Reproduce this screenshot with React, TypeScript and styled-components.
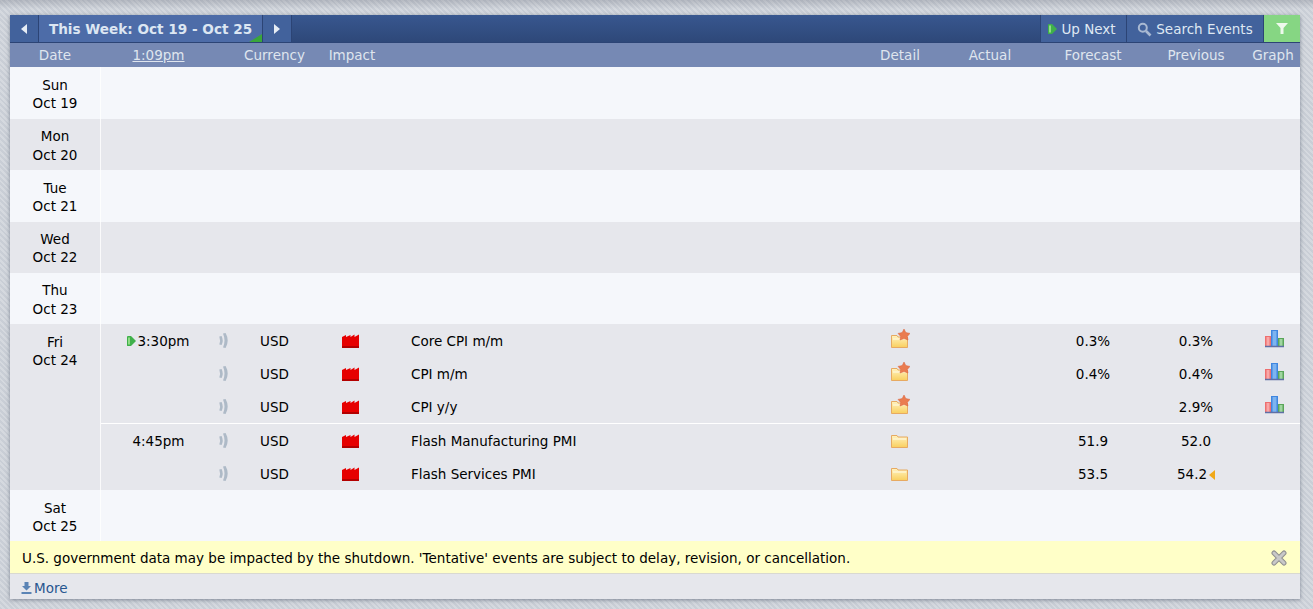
import React from 'react'
import styled, { createGlobalStyle } from 'styled-components'

const GlobalStyle = createGlobalStyle`
  html, body { margin: 0; padding: 0; }
  body {
    height: 609px;
    overflow: hidden;
    font-family: 'DejaVu Sans', Verdana, sans-serif;
    font-size: 13.5px;
    background:
      linear-gradient(rgba(70, 75, 90, 0.22), rgba(70, 75, 90, 0) 9px),
      repeating-linear-gradient(45deg, #c9ced6 0, #c9ced6 2px, #d5d9df 2px, #d5d9df 4px);
  }
`

const EVENT_COLUMNS = '115px 16px 85px 66px 1fr 80px 100px 106px 100px 54px'

const Page = styled.div`
  padding: 15px 13px 10px 10px;
`

const Panel = styled.div`
  width: 1290px;
  box-shadow: 0 1px 4px rgba(60, 70, 90, 0.55);
`

const Toolbar = styled.div`
  display: flex;
  height: 27px;
  border-bottom: 1px solid #2c4475;
  background: linear-gradient(#38578f, #2e4879);
  color: #dfe8f3;
`

const ToolButton = styled.div<{ $w: number; $active?: boolean; $edge?: boolean }>`
  width: ${(p) => p.$w}px;
  flex: none;
  display: flex;
  align-items: center;
  justify-content: center;
  gap: 4px;
  padding: 1px ${(p) => (p.$edge ? 3 : 0)}px 0 0;
  position: relative;
  box-sizing: border-box;
  background: ${(p) => (p.$active ? '#4d6ca8' : '#42629c')};
  border-right: 1px solid #2c4475;
  border-left: ${(p) => (p.$edge ? '1px solid #2c4475' : 'none')};
`

const WeekLabel = styled.span`
  font-weight: bold;
  font-size: 13.6px;
  color: #dce6f2;
`

const Corner = styled.span`
  position: absolute;
  right: 0;
  bottom: 0;
  width: 0;
  height: 0;
  border-left: 13px solid transparent;
  border-bottom: 8px solid #3aa63a;
`

const Spacer = styled.div`
  flex: 1;
`

const FilterButton = styled.div`
  width: 36px;
  flex: none;
  display: flex;
  align-items: center;
  justify-content: center;
  background: #86d683;
`

const HeaderRow = styled.div`
  display: grid;
  grid-template-columns: 90px 1px ${EVENT_COLUMNS};
  height: 24.4px;
  align-items: center;
  background: #7689b4;
  color: #dfe5ee;
  text-align: center;
`

const TimeNow = styled.span`
  text-decoration: underline;
`

const ImpactHead = styled.span`
  padding-left: 4px;
`

const DayRow = styled.div<{ $shade?: boolean; $h: number }>`
  display: flex;
  min-height: ${(p) => p.$h}px;
  background: ${(p) => (p.$shade ? '#e6e7ec' : '#f5f7fb')};
  color: #000;
`

const DayCell = styled.div`
  width: 90px;
  flex: none;
  padding-top: 8.5px;
  box-sizing: border-box;
  text-align: center;
  line-height: 18.4px;
`

const DayDivider = styled.div`
  width: 1px;
  flex: none;
  background: #fff;
  opacity: 0.8;
`

const Events = styled.div`
  flex: 1;
  min-width: 0;
`

const Group = styled.div`
  & + & {
    border-top: 1px solid #fff;
  }
`

const EventRow = styled.div`
  display: grid;
  grid-template-columns: ${EVENT_COLUMNS};
  height: 33px;
  padding-top: 1px;
  box-sizing: border-box;
  align-items: center;
  text-align: center;
`

const Title = styled.div`
  text-align: left;
  padding-left: 28px;
`

const Cell = styled.div`
  display: flex;
  align-items: center;
  justify-content: center;
  margin-top: -1px;
`

const TimeText = styled.div`
  display: flex;
  align-items: center;
  justify-content: center;
  gap: 1px;
`

const Revised = styled.span`
  display: inline-block;
  vertical-align: -1px;
  margin-left: 2px;
  width: 0;
  height: 0;
  border-top: 5px solid transparent;
  border-bottom: 5px solid transparent;
  border-right: 6px solid #f0a818;
`

const Banner = styled.div`
  display: flex;
  align-items: center;
  justify-content: space-between;
  height: 33px;
  padding: 1px 13px 0 12px;
  box-sizing: border-box;
  background: #ffffc8;
  border-bottom: 1px solid #d9d9d0;
  color: #000;
`

const Footer = styled.div`
  display: flex;
  align-items: center;
  gap: 2px;
  height: 25px;
  padding: 3px 0 0 11px;
  box-sizing: border-box;
  background: #e6e7ec;
  color: #28568f;
`

const Arrow = ({ left }: { left?: boolean }) => (
  <svg width="6" height="10" viewBox="0 0 6 10">
    <path d={left ? 'M6 0V10L0 5Z' : 'M0 0V10L6 5Z'} fill="#e6edf5" />
  </svg>
)

const Play = () => (
  <svg width="9" height="10" viewBox="0 0 9 10">
    <path d="M0 0.5Q0 0 1 0H4L9 5L4 10H1Q0 10 0 9.5Z" fill="#3fb04a" />
    <path d="M1 1.5H3V8.5H1Z" fill="#8fdc85" />
  </svg>
)

const Search = () => (
  <svg width="15" height="15" viewBox="0 0 15 15" fill="none">
    <circle cx="5.8" cy="5.8" r="4" stroke="#a9b9d2" strokeWidth="2" />
    <path d="M9 9L13.5 13.5" stroke="#a9b9d2" strokeWidth="2.6" />
  </svg>
)

const Funnel = () => (
  <svg width="12" height="11" viewBox="0 0 12 11">
    <path d="M0 0H12L7.5 5V11H4.5V5Z" fill="#eef9ec" />
  </svg>
)

const Sound = () => (
  <svg width="10" height="15" viewBox="0 0 10 15" fill="#aebac7">
    <path d="M0.3 3.5L2.6 3Q4.8 7.5 2.6 12L0.3 11.5Q1.8 7.5 0.3 3.5Z" />
    <path d="M4 0.5L6.6 0Q10.8 7.5 6.6 15L4 14.5Q7 7.5 4 0.5Z" />
  </svg>
)

const Factory = () => (
  <svg width="17" height="14" viewBox="0 0 17 14">
    <path d="M0 3L4 1V3L8.5 1V3L12.5 0.5V3L17 0.5V14H0Z" fill="#e60000" />
    <path d="M0 12H17V14H0Z" fill="#b30000" />
  </svg>
)

const Folder = ({ star }: { star?: boolean }) => (
  <svg width="20" height="24" viewBox="0 0 20 24">
    <defs>
      <linearGradient id="folderFill" x1="0" y1="0" x2="0" y2="1">
        <stop offset="0" stopColor="#fff3c0" />
        <stop offset="1" stopColor="#f9cf5e" />
      </linearGradient>
    </defs>
    <path d="M1.5 6.5H7L8 8H17.5V18.5H1.5Z" fill="url(#folderFill)" stroke="#e7aa62" />
    <path d="M3 9.5H16V10.5H3Z" fill="#fffbe8" />
    {star && <path d="M14 0L15.8 3.6L20 4.4L17.3 7.4L18 11L14 9.6L10 11L10.7 7.4L8 4.4L12.2 3.6Z" fill="#ea7c50" stroke="#d9603a" strokeWidth="0.5" />}
  </svg>
)

const Graph = () => (
  <svg width="22" height="21" viewBox="0 0 22 21">
    <rect x="3" y="6" width="6" height="10" fill="#ee6f6f" />
    <rect x="4.5" y="7" width="3" height="9" fill="#f8a8a8" />
    <rect x="9" y="0" width="7" height="16" fill="#3f86e0" />
    <rect x="10.5" y="1" width="4" height="15" fill="#7db4f0" />
    <rect x="16" y="8" width="6" height="8" fill="#5aa65a" />
    <rect x="17.5" y="9" width="3" height="7" fill="#a0d6a0" />
    <path d="M3 16.5H22" stroke="#5f6fa6" strokeWidth="1.5" />
  </svg>
)

const Close = () => (
  <svg width="16" height="16" viewBox="0 0 16 16">
    <path d="M3 3L13 13M13 3L3 13" stroke="#8f8f8f" strokeWidth="5" strokeLinecap="round" />
    <path d="M3 3L13 13M13 3L3 13" stroke="#c8c8c8" strokeWidth="3" strokeLinecap="round" />
  </svg>
)

const Download = () => (
  <svg width="11" height="12" viewBox="0 0 11 12">
    <path d="M3.5 0H7.5V4H10L5.5 8.5L1 4H3.5Z" fill="#5b84b5" />
    <path d="M0.5 10H10.5V12H0.5Z" fill="#5b84b5" />
  </svg>
)

type Ev = {
  time?: string
  next?: boolean
  title: string
  star?: boolean
  forecast?: string
  previous: string
  revised?: boolean
  graph?: boolean
}

const groups: Ev[][] = [
  [
    { time: '3:30pm', next: true, title: 'Core CPI m/m', star: true, forecast: '0.3%', previous: '0.3%', graph: true },
    { title: 'CPI m/m', star: true, forecast: '0.4%', previous: '0.4%', graph: true },
    { title: 'CPI y/y', star: true, previous: '2.9%', graph: true },
  ],
  [
    { time: '4:45pm', title: 'Flash Manufacturing PMI', forecast: '51.9', previous: '52.0' },
    { title: 'Flash Services PMI', forecast: '53.5', previous: '54.2', revised: true },
  ],
]

const emptyDays = [
  { day: 'Sun', date: 'Oct 19' },
  { day: 'Mon', date: 'Oct 20', shade: true },
  { day: 'Tue', date: 'Oct 21' },
  { day: 'Wed', date: 'Oct 22', shade: true },
  { day: 'Thu', date: 'Oct 23' },
]

const App = () => {
  return (
    <Page>
      <GlobalStyle />
      <Panel>
        <Toolbar>
          <ToolButton $w={29}><Arrow left /></ToolButton>
          <ToolButton $w={224} $active>
            <WeekLabel>This Week: Oct 19 - Oct 25</WeekLabel>
            <Corner />
          </ToolButton>
          <ToolButton $w={29}><Arrow /></ToolButton>
          <Spacer />
          <ToolButton $w={87} $edge><Play />Up Next</ToolButton>
          <ToolButton $w={137}><Search />Search Events</ToolButton>
          <FilterButton><Funnel /></FilterButton>
        </Toolbar>

        <HeaderRow>
          <span>Date</span>
          <span />
          <TimeNow>1:09pm</TimeNow>
          <span />
          <span>Currency</span>
          <ImpactHead>Impact</ImpactHead>
          <span />
          <span>Detail</span>
          <span>Actual</span>
          <span>Forecast</span>
          <span>Previous</span>
          <span>Graph</span>
        </HeaderRow>

        {emptyDays.map((d) => (
          <DayRow key={d.day} $h={51.4} $shade={d.shade}>
            <DayCell>{d.day}<br />{d.date}</DayCell>
            <DayDivider />
          </DayRow>
        ))}

        <DayRow $h={166} $shade>
          <DayCell>Fri<br />Oct 24</DayCell>
          <DayDivider />
          <Events>
            {groups.map((g, i) => (
              <Group key={i}>
                {g.map((ev) => (
                  <EventRow key={ev.title}>
                    <TimeText>{ev.next && <Play />}{ev.time}</TimeText>
                    <Cell><Sound /></Cell>
                    <div>USD</div>
                    <Cell><Factory /></Cell>
                    <Title>{ev.title}</Title>
                    <Cell><Folder star={ev.star} /></Cell>
                    <div />
                    <div>{ev.forecast}</div>
                    <div>{ev.previous}{ev.revised && <Revised />}</div>
                    <Cell>{ev.graph && <Graph />}</Cell>
                  </EventRow>
                ))}
              </Group>
            ))}
          </Events>
        </DayRow>

        <DayRow $h={51}>
          <DayCell>Sat<br />Oct 25</DayCell>
          <DayDivider />
        </DayRow>

        <Banner>
          <span>U.S. government data may be impacted by the shutdown. 'Tentative' events are subject to delay, revision, or cancellation.</span>
          <Close />
        </Banner>

        <Footer><Download />More</Footer>
      </Panel>
    </Page>
  )
}

export default App
